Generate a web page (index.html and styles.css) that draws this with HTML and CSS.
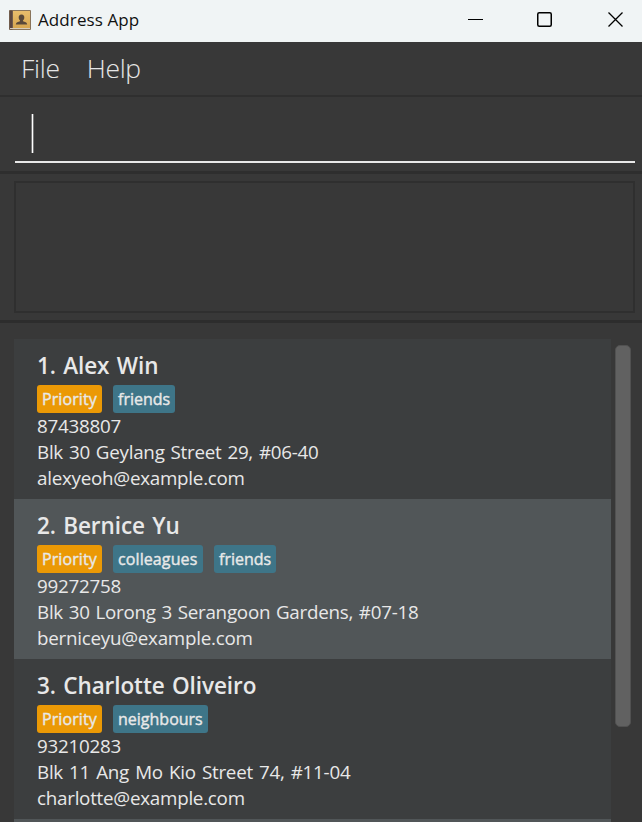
FILE: index.html
```html
<!DOCTYPE html>
<html lang="en">
<head>
<meta charset="utf-8">
<title>Address App</title>
<link rel="stylesheet" href="styles.css">
</head>
<body>
<div class="window">
  <header class="titlebar">
    <svg class="app-icon" width="22" height="20" viewBox="0 0 22 20">
      <defs><linearGradient id="cover" x1="0" y1="0" x2="0" y2="1"><stop offset="0" stop-color="#e9bd6c"/><stop offset="1" stop-color="#d7a650"/></linearGradient></defs>
      <rect x="0" y="0" width="22" height="20" rx="1" fill="#89745b"/>
      <rect x="0.5" y="0.5" width="3" height="19" fill="#5b4540"/>
      <rect x="1" y="18" width="20" height="1" fill="#d8cdbb"/>
      <rect x="4" y="1" width="17" height="17" fill="url(#cover)"/>
      <path d="M12.500 4.500c-2 0-3 1.300-2.800 3.200.1 1.300.8 2.200 1.300 2.700v.9c-1.800.7-4 .9-4.200 3.200h11.400c-.2-2.300-2.400-2.500-4.200-3.200v-.9c.5-.5 1.200-1.400 1.300-2.700.2-1.900-.8-3.200-2.800-3.200z" fill="#59483a"/>
    </svg>
    <h1 class="title">Address App</h1>
    <div class="controls">
      <svg width="15" height="15" viewBox="0 0 15 15"><path d="M0 7.500h15" stroke="#000" fill="none"/></svg>
      <svg width="15" height="15" viewBox="0 0 15 15"><rect x=".75" y=".75" width="13.500" height="13.500" rx="1.500" stroke="#000" stroke-width="1.500" fill="none"/></svg>
      <svg width="15" height="15" viewBox="0 0 15 15"><path d="M.5.5l14 14M14.500.5l-14 14" stroke="#000" stroke-width="1.300" fill="none"/></svg>
    </div>
  </header>
  <nav class="menubar"><span class="file">File</span><span class="help">Help</span></nav>
  <section class="command"><div class="field"><i class="caret"></i></div></section>
  <section class="result"><div class="display"></div></section>
  <main class="people">
    <div class="list">
      <article class="card">
        <h2 class="n1">1. Alex Win</h2>
        <div class="tags"><span class="tag priority">Priority</span><span class="tag friends">friends</span></div>
        <p class="phone">87438807</p>
        <p class="a1">Blk 30 Geylang Street 29, #06-40</p>
        <p class="e1">alexyeoh@example.com</p>
      </article>
      <article class="card alt">
        <h2 class="n2">2. Bernice Yu</h2>
        <div class="tags"><span class="tag priority">Priority</span><span class="tag colleagues">colleagues</span><span class="tag friends">friends</span></div>
        <p class="phone">99272758</p>
        <p class="a2">Blk 30 Lorong 3 Serangoon Gardens, #07-18</p>
        <p class="e2">berniceyu@example.com</p>
      </article>
      <article class="card">
        <h2 class="n3">3. Charlotte Oliveiro</h2>
        <div class="tags"><span class="tag priority">Priority</span><span class="tag neighbours">neighbours</span></div>
        <p class="phone">93210283</p>
        <p class="a3">Blk 11 Ang Mo Kio Street 74, #11-04</p>
        <p class="e3">charlotte@example.com</p>
      </article>
      <article class="card alt"></article>
    </div>
    <div class="scrollbar"><div class="thumb"></div></div>
  </main>
</div>
</body>
</html>
```
FILE: styles.css
```css
* { box-sizing: border-box; }
body { margin: 0; background: #383838; font-family: "Open Sans", sans-serif; }
h1, h2, p { margin: 0; font-weight: 400; white-space: nowrap; }
svg { display: block; flex: none; }
.window { height: 822px; overflow: hidden; display: flex; flex-direction: column; }
.titlebar { flex: none; height: 42px; background: #f0f4f5; display: flex; align-items: center; padding: 0 19px 3px 9px; }
.title { margin-left: 7px; font-size: 17px; letter-spacing: .1px; line-height: 24px; color: #111; }
.controls { margin-left: auto; display: flex; gap: 54px; }
.controls svg:last-child { margin-left: 2px; }
.menubar { flex: none; height: 55px; padding: 0 21px; display: flex; gap: 27px; border-bottom: 2px solid #2f2f2f; font-size: 26.5px; letter-spacing: -.3px; font-weight: 300; line-height: 53px; color: #e6e6e6; }
.command { flex: none; height: 77px; padding: 17px 7px 0 15px; border-bottom: 3px solid #2e2e2e; }
.field { height: 49px; padding-left: 16px; border-bottom: 2px solid #e8e8e8; }
.caret { display: block; width: 3px; height: 39px; background: linear-gradient(to right, #777 1px, #fff 1px, #fff 2px, #777 2px); }
.result { flex: none; height: 149px; padding: 7px 7px 0 14px; border-bottom: 3px solid #2d2d2d; }
.display { height: 132px; border: 2px solid #2f2f2f; }
.people { flex: 1; min-height: 0; display: flex; padding: 16px 11px 0 14px; }
.list { width: 597px; height: 483px; overflow: hidden; }
.card { height: 160px; padding: 10px 23px 0; background: #3c3e3f; color: #e8e8e8; font-size: 18.8px; letter-spacing: -.25px; line-height: 26px; }
.card.alt { background: #515658; }
.card h2 { height: 36px; font-size: 22.5px; line-height: 34px; font-weight: 600; letter-spacing: -.08px; word-spacing: 1.6px; }
.a1 { word-spacing: 1.3px; }
.a2 { word-spacing: 1.1px; }
.a3 { word-spacing: 1.5px; }
.tags { display: flex; gap: 11px; height: 28px; }
.tag { height: 28px; padding: 0 5px; border-radius: 3px; background: #3e7588; font-size: 16px; letter-spacing: 0; line-height: 28px; -webkit-text-stroke: .4px #e8e8e8; white-space: nowrap; }
.tag.priority { width: 65px; background: #eb9905; letter-spacing: .1px; }
.tag.friends { width: 62px; }
.tag.colleagues { width: 90px; letter-spacing: .1px; }
.tag.neighbours { width: 95px; }
.scrollbar { margin-left: 4px; padding-top: 6px; }
.thumb { width: 16px; height: 382px; border-radius: 5px; background: #616161; border: 1px solid #515151; }
```
